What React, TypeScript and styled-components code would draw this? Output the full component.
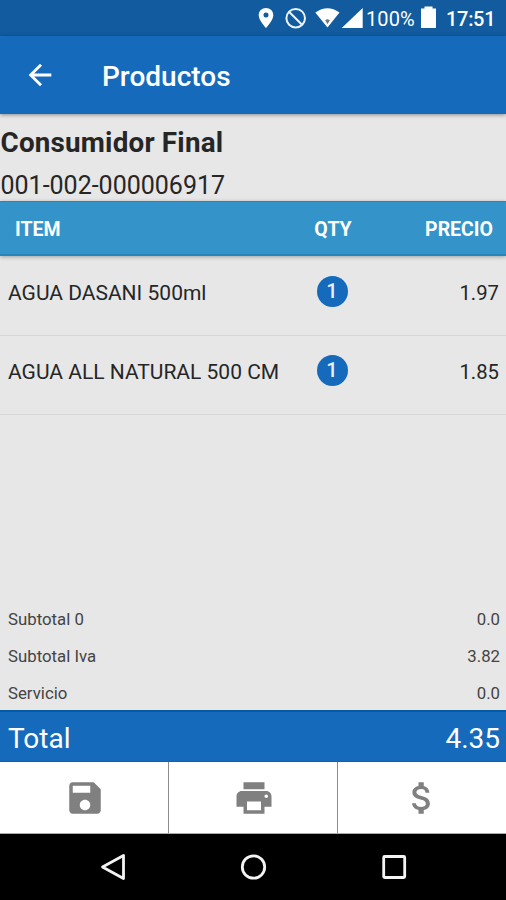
import React from "react";
import styled, { createGlobalStyle } from "styled-components";

const Global = createGlobalStyle`
  * { box-sizing: border-box; }
  body { margin: 0; background: #e7e7e7; }
`;

const Screen = styled.div`
  width: 506px;
  height: 900px;
  display: flex;
  flex-direction: column;
  overflow: hidden;
  background: #e7e7e7;
  color: #262626;
  font-family: Roboto, "Liberation Sans", sans-serif;
  white-space: nowrap;
`;

const StatusBar = styled.div`
  height: 36px;
  flex: none;
  display: flex;
  align-items: center;
  background: #115b9e;
  color: #fff;
`;

const StatusIcons = styled.svg`
  width: 366px;
  height: 36px;
  flex: none;
  display: block;
`;

const Battery = styled.svg`
  width: 16px;
  height: 36px;
  margin: 0 9px 0 5px;
  flex: none;
  display: block;
`;

const StatusText = styled.span<{ $w: number; $medium?: boolean }>`
  width: ${(p) => p.$w}px;
  padding-top: 2px;
  font-size: 20px;
  line-height: 24px;
  font-weight: ${(p) => (p.$medium ? 500 : 400)};
  letter-spacing: ${(p) => (p.$medium ? -0.3 : 0.1)}px;
`;

const AppBar = styled.header`
  height: 78px;
  flex: none;
  display: flex;
  align-items: center;
  padding-left: 23px;
  background: #156abb;
  color: #fff;
  box-shadow: 0 1px 4px rgba(0, 0, 0, 0.4);
  z-index: 1;
`;

const Title = styled.h1`
  margin: 4px 0 0 45px;
  font-size: 28px;
  line-height: 34px;
  font-weight: 500;
`;

const Glyph = styled.svg<{ $size: number }>`
  width: ${(p) => p.$size}px;
  height: ${(p) => p.$size}px;
  display: block;
  fill: currentColor;
`;

const Customer = styled.section`
  height: 87px;
  flex: none;
  padding: 12px 0 0 0.5px;
`;

const CustomerName = styled.div`
  font-size: 27.8px;
  line-height: 34px;
  font-weight: 700;
  letter-spacing: 0.2px;
`;

const Invoice = styled.div`
  margin-top: 10px;
  font-size: 25px;
  line-height: 32px;
`;

const TableHead = styled.div`
  height: 55px;
  flex: none;
  display: grid;
  grid-template-columns: 278px 80px 1fr;
  align-items: center;
  padding: 2px 13px 0 15px;
  background: #3493c8;
  border-top: 1px solid #2289bb;
  border-bottom: 2px solid #2688ba;
  box-shadow: 0 1px 4px rgba(0, 0, 0, 0.3);
  color: #fff;
  font-size: 19.5px;
  font-weight: 700;
`;

const HeadCell = styled.span<{ $align?: string }>`
  text-align: ${(p) => p.$align ?? "left"};
`;

const Row = styled.div`
  height: 79px;
  flex: none;
  display: grid;
  grid-template-columns: 284px 80px 1fr;
  align-items: center;
  padding: 0 7px 9px 8px;
  border-bottom: 1px solid #d7d7d7;
  font-size: 21px;
`;

const Name = styled.span`
  padding-top: 2px;
`;

const Price = styled.span`
  padding-top: 2px;
  text-align: right;
  font-size: 20.3px;
`;

const Count = styled.span`
  width: 31px;
  height: 31px;
  justify-self: center;
  display: flex;
  align-items: center;
  justify-content: center;
  padding-bottom: 1px;
  border-radius: 50%;
  background: #156abb;
  color: #e8f0fb;
  font-size: 20px;
  font-weight: 500;
`;

const Items = styled.main`
  flex: 1;
  padding-top: 1px;
`;

const Subtotals = styled.section`
  height: 111px;
  flex: none;
`;

const Subtotal = styled.div`
  height: 37px;
  display: flex;
  align-items: center;
  justify-content: space-between;
  padding: 2px 6px 0 8px;
  font-size: 16.8px;
  color: #444;
`;

const Total = styled.div`
  height: 52px;
  flex: none;
  display: flex;
  align-items: center;
  justify-content: space-between;
  padding: 3px 6px 0 8px;
  background: #156abb;
  border-top: 2px solid #075ba5;
  border-bottom: 1px solid #0e62b1;
  color: #fff;
  font-size: 28px;
`;

const Actions = styled.div`
  height: 72px;
  flex: none;
  display: grid;
  grid-template-columns: 169px 169px 168px;
  background: #fff;
  border-bottom: 1px solid #aaa;
`;

const Action = styled.button`
  display: flex;
  align-items: center;
  justify-content: center;
  padding: 0 0 0 1px;
  border: 0;
  border-right: 1px solid #8c8c8c;
  background: none;
  color: #808080;
  &:last-child {
    padding: 0;
    border-right: 0;
  }
`;

const NavBar = styled.nav`
  height: 66px;
  flex: none;
  background: #000;
`;

const NavIcons = styled.svg`
  width: 506px;
  height: 66px;
  display: block;
  fill: none;
  stroke: #f4f4f4;
  stroke-width: 2.8;
  stroke-linejoin: round;
`;

const items = [
  { name: "AGUA DASANI 500ml", qty: 1, price: "1.97" },
  { name: "AGUA ALL NATURAL 500 CM", qty: 1, price: "1.85" },
];

const subtotals = [
  ["Subtotal 0", "0.0"],
  ["Subtotal Iva", "3.82"],
  ["Servicio", "0.0"],
];

const actions = [
  {
    label: "Guardar",
    path: "M17 3H5c-1.11 0-2 .9-2 2v14c0 1.1.89 2 2 2h14c1.1 0 2-.9 2-2V7l-4-4zm-5 16c-1.66 0-3-1.34-3-3s1.34-3 3-3 3 1.34 3 3-1.34 3-3 3zm3-10H5V5h10v4z",
  },
  {
    label: "Imprimir",
    path: "M19 8H5c-1.66 0-3 1.34-3 3v6h4v4h12v-4h4v-6c0-1.66-1.34-3-3-3zm-3 11H8v-5h8v5zm3-7c-.55 0-1-.45-1-1s.45-1 1-1 1 .45 1 1-.45 1-1 1zm-1-9H6v4h12V3z",
  },
  {
    label: "Cobrar",
    path: "M11.8 10.9c-2.27-.59-3-1.2-3-2.15 0-1.09 1.01-1.85 2.7-1.85 1.78 0 2.44.85 2.5 2.1h2.21c-.07-1.72-1.12-3.3-3.21-3.81V3h-3v2.16c-1.94.42-3.5 1.68-3.5 3.61 0 2.31 1.91 3.46 4.7 4.13 2.5.6 3 1.48 3 2.41 0 .69-.49 1.79-2.7 1.79-2.06 0-2.87-.92-2.98-2.1h-2.2c.12 2.19 1.76 3.42 3.68 3.83V21h3v-2.15c1.95-.37 3.5-1.5 3.5-3.55 0-2.84-2.43-3.81-4.7-4.4z",
  },
];

export default function App() {
  return (
    <>
      <Global />
      <Screen>
        <StatusBar>
          <StatusIcons viewBox="0 0 366 36" fill="#fff">
            <path
              fillRule="evenodd"
              d="M266 8c-4.1 0-7.3 3.1-7.3 7.2 0 5.2 7.3 12.8 7.3 12.8s7.3-7.6 7.3-12.8C273.3 11.1 270.1 8 266 8zm0 4.600a2.500 2.500 0 1 1 0 5 2.500 2.500 0 0 1 0-5z"
            />
            <g fill="none" stroke="#eaf4ff" strokeWidth="2">
              <circle cx="295.700" cy="18.200" r="9.300" />
              <path d="M289 11.700l13.300 13.300" />
            </g>
            <path d="M315.300 12.500Q327.500 3.800 339.500 12.500L327.500 27.600z" />
            <path d="M325.200 20.200q2.300-1.800 4.600 0l-2.300 4z" fill="#777" />
            <path d="M362.700 8v20h-21z" />
          </StatusIcons>
          <StatusText $w={50}>100%</StatusText>
          <Battery viewBox="0 0 16 36">
            <path d="M3.500 6.500h8v2H15V28H0V8.500h3.500z" fill="#fff" />
          </Battery>
          <StatusText $w={60} $medium>
            17:51
          </StatusText>
        </StatusBar>
        <AppBar>
          <Glyph $size={34} viewBox="0 0 24 24">
            <path d="M20 11H7.830l5.590-5.590L12 4l-8 8 8 8 1.410-1.410L7.830 13H20v-2z" />
          </Glyph>
          <Title>Productos</Title>
        </AppBar>
        <Customer>
          <CustomerName>Consumidor Final</CustomerName>
          <Invoice>001-002-000006917</Invoice>
        </Customer>
        <TableHead>
          <HeadCell>ITEM</HeadCell>
          <HeadCell $align="center">QTY</HeadCell>
          <HeadCell $align="right">PRECIO</HeadCell>
        </TableHead>
        <Items>
          {items.map((item) => (
            <Row key={item.name}>
              <Name>{item.name}</Name>
              <Count>{item.qty}</Count>
              <Price>{item.price}</Price>
            </Row>
          ))}
        </Items>
        <Subtotals>
          {subtotals.map(([label, value]) => (
            <Subtotal key={label}>
              <span>{label}</span>
              <span>{value}</span>
            </Subtotal>
          ))}
        </Subtotals>
        <Total>
          <span>Total</span>
          <span>4.35</span>
        </Total>
        <Actions>
          {actions.map((action) => (
            <Action key={action.label} aria-label={action.label}>
              <Glyph $size={42} viewBox="0 0 24 24">
                <path d={action.path} />
              </Glyph>
            </Action>
          ))}
        </Actions>
        <NavBar>
          <NavIcons viewBox="0 0 506 66">
            <path d="M123.500 21.500v23L102.500 33z" />
            <circle cx="253.500" cy="33" r="11.200" />
            <rect x="383.700" y="22.500" width="21" height="21" rx="1" />
          </NavIcons>
        </NavBar>
      </Screen>
    </>
  );
}
